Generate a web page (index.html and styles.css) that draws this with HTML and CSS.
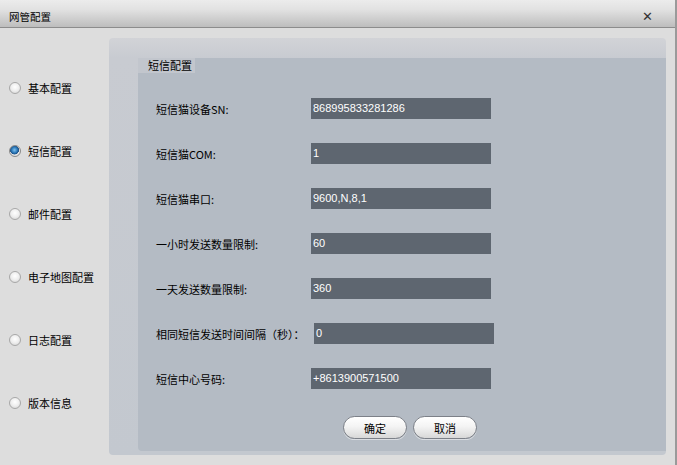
FILE: index.html
```html
<!DOCTYPE html>
<html>
<head>
<meta charset="utf-8">
<link rel="stylesheet" href="styles.css">
</head>
<body>
<div class="window">
  <div class="titlebar">
    <span class="title">网管配置</span>
    <span class="close">✕</span>
  </div>
  <div class="main">
    <ul class="nav">
      <li class="nav-item"><span class="radio"></span><span>基本配置</span></li>
      <li class="nav-item"><span class="radio checked"></span><span>短信配置</span></li>
      <li class="nav-item"><span class="radio"></span><span>邮件配置</span></li>
      <li class="nav-item"><span class="radio"></span><span>电子地图配置</span></li>
      <li class="nav-item"><span class="radio"></span><span>日志配置</span></li>
      <li class="nav-item"><span class="radio"></span><span>版本信息</span></li>
    </ul>
    <div class="panel">
      <div class="group">
        <div class="group-title">短信配置</div>
        <div class="form">
          <div class="row"><label>短信猫设备SN:</label><div class="input">868995833281286</div></div>
          <div class="row"><label>短信猫COM:</label><div class="input">1</div></div>
          <div class="row"><label>短信猫串口:</label><div class="input">9600,N,8,1</div></div>
          <div class="row"><label>一小时发送数量限制:</label><div class="input">60</div></div>
          <div class="row"><label>一天发送数量限制:</label><div class="input">360</div></div>
          <div class="row wide"><label>相同短信发送时间间隔（秒）：</label><div class="input">0</div></div>
          <div class="row"><label>短信中心号码:</label><div class="input">+8613900571500</div></div>
        </div>
        <div class="buttons">
          <button class="btn">确定</button>
          <button class="btn">取消</button>
        </div>
      </div>
    </div>
  </div>
</div>
</body>
</html>
```

FILE: styles.css
```css
* { box-sizing: border-box; }
html, body { margin: 0; padding: 0; }
body {
  width: 677px;
  height: 465px;
  overflow: hidden;
  font-family: "Noto Sans CJK SC", "Liberation Sans", sans-serif;
  font-size: 11px;
  color: #000;
  background: #dddddd;
}
.window {
  width: 677px;
  height: 465px;
  background: #dddddd;
  border-right: 2px solid #9a9a9a;
  display: flex;
  flex-direction: column;
}
.titlebar {
  height: 28px;
  flex: none;
  display: flex;
  align-items: flex-end;
  justify-content: space-between;
  padding: 0 22px 3px 9px;
  background: linear-gradient(to bottom, #ececec 0%, #e2e2e2 35%, #bdbdbd 100%);
  border-bottom: 1px solid #8c8c8c;
}
.title { font-size: 10.5px; line-height: 14px; }
.close { font-size: 13px; line-height: 14px; color: #333; font-family: "DejaVu Sans", sans-serif; }
.main {
  flex: 1;
  display: flex;
  align-items: flex-start;
}
.nav {
  list-style: none;
  margin: 0;
  padding: 53px 0 0 9px;
  width: 109px;
  flex: none;
  display: flex;
  flex-direction: column;
  gap: 49px;
}
.nav-item {
  display: flex;
  align-items: center;
  gap: 7px;
  height: 14px;
  line-height: 14px;
  white-space: nowrap;
}
.radio {
  width: 12px;
  height: 12px;
  border-radius: 50%;
  border: 1px solid #a8a8a8;
  background: radial-gradient(circle at 50% 40%, #ffffff 0%, #eeeeee 50%, #cfcfcf 100%);
  flex: none;
}
.radio.checked {
  background: radial-gradient(circle at 45% 40%, #7fc0ee 0%, #2a78b8 35%, #1c4f85 52%, #e8e8e8 58%, #cfcfcf 100%);
  border-color: #8a8a8a;
}
.panel {
  margin-top: 10px;
  width: 557px;
  height: 417px;
  background: linear-gradient(to bottom, #d2d3d7 0px, #c8cbd1 20px, #c3c8cf 100%);
  border-radius: 4px;
  padding: 20px 0 4px 29px;
  display: flex;
}
.group {
  flex: 1;
  background: #b4bbc4;
  border-radius: 0 0 0 4px;
  position: relative;
  padding: 0 0 0 18px;
}
.group-title {
  position: absolute;
  left: 0;
  top: 0;
  width: 57px;
  height: 15px;
  padding-left: 10px;
  background: #c2c6cd;
  line-height: 15px;
}
.form {
  padding-top: 40px;
  display: flex;
  flex-direction: column;
  gap: 24px;
}
.row {
  display: flex;
  align-items: center;
  height: 21px;
}
.row label {
  width: 155px;
  flex: none;
  white-space: nowrap;
}
.row.wide label { width: 158px; }
.input {
  width: 180px;
  height: 21px;
  background: #5e6670;
  color: #ffffff;
  font-family: "Liberation Sans", sans-serif;
  font-size: 11px;
  line-height: 21px;
  padding-left: 2px;
}
.buttons {
  display: flex;
  gap: 6px;
  margin: 27px 0 0 187px;
}
.btn {
  width: 64px;
  height: 23px;
  border-radius: 12px;
  border: 1px solid #7c8088;
  background: linear-gradient(to bottom, #ffffff 0%, #f4f4f4 45%, #d8d8d8 100%);
  font-family: "Noto Sans CJK SC", sans-serif;
  font-size: 11px;
  color: #000;
  padding: 0;
  box-shadow: 0 1px 0 rgba(255,255,255,0.5);
}
```
